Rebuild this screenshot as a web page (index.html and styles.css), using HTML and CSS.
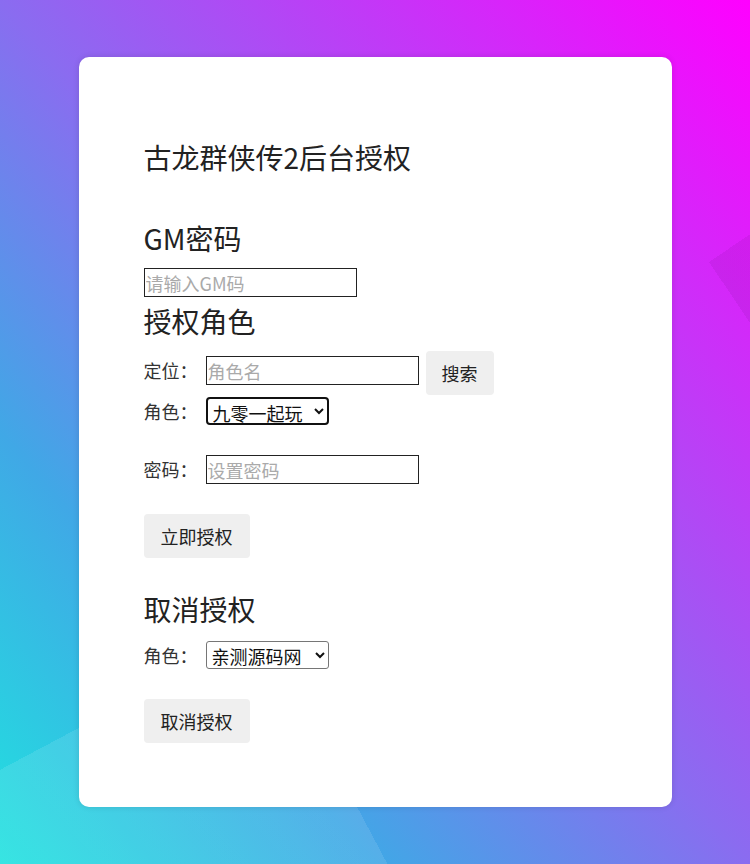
FILE: index.html
```html
<!DOCTYPE html>
<html lang="zh-CN">
<head>
  <meta charset="UTF-8" />
  <title>古龙群侠传2后台授权</title>
  <link rel="stylesheet" href="styles.css">
</head>
<body>
  <div class="container">
    <h2 class="title">古龙群侠传2后台授权</h2>

    <h3 class="gm-title">GM密码</h3>
    <input type="text" class="gm-input" placeholder="请输入GM码" />

    <h3 class="role-title">授权角色</h3>
    <div class="field field-search">
      <label>定位：</label>
      <input type="text" placeholder="角色名" />
      <button class="btn">搜索</button>
    </div>
    <div class="field field-role">
      <label>角色：</label>
      <select class="select-focus">
        <option>九零一起玩</option>
      </select>
    </div>
    <div class="field field-pass">
      <label>密码：</label>
      <input type="text" placeholder="设置密码" />
    </div>
    <button class="btn btn-grant">立即授权</button>

    <h3 class="cancel-title">取消授权</h3>
    <div class="field field-cancel">
      <label>角色：</label>
      <select>
        <option>亲测源码网</option>
      </select>
    </div>
    <button class="btn btn-cancel">取消授权</button>
  </div>
</body>
</html>
```

FILE: styles.css
```css
* {
  box-sizing: border-box;
}

html, body {
  height: 100%;
}

body {
  margin: 0;
  min-height: 864px;
  overflow: hidden;
  font-family: "Microsoft YaHei", "Noto Sans CJK SC", "Noto Sans", sans-serif;
  color: #222;
  /* two faint rotated squares over the main gradient */
  background:
    conic-gradient(from 152deg at 263px 630px, rgba(255, 255, 255, 0.1) 0deg 90deg, transparent 90deg),
    conic-gradient(from 56deg at 709px 262px, rgba(60, 0, 80, 0.08) 0deg 90deg, transparent 90deg),
    linear-gradient(to top right, #20e2df 0%, #40a8e6 25%, #8a6cf0 50%, #ff00ff 100%);
}

.container {
  width: 593px;
  margin: 57px auto 0;
  padding: 80px 65px 64px;
  background: white;
  border-radius: 10px;
  box-shadow: 0 0 6px rgba(0, 0, 0, 0.12);
}

h2, h3 {
  margin: 0;
  font-size: 28px;
  font-weight: normal;
  line-height: 40px;
}

.gm-title {
  margin-top: 41px;
}

.role-title {
  margin-top: 4px;
}

.cancel-title {
  margin-top: 31px;
}

input {
  display: block;
  width: 213px;
  height: 29px;
  padding: 0 1px;
  font-family: inherit;
  font-size: 18px;
  color: #222;
  border: 1px solid #222;
  border-radius: 0;
  outline: none;
}

input::placeholder {
  color: #aaa;
}

.gm-input {
  margin-top: 10px;
}

select {
  width: 123px;
  height: 28px;
  padding: 0 1px;
  font-family: inherit;
  font-size: 18px;
  color: #111;
  background: white;
  border: 1px solid #767676;
  border-radius: 3px;
}

.select-focus {
  border: 2px solid #111;
  border-radius: 4px;
}

.field {
  display: flex;
  align-items: flex-start;
  gap: 8px;
}

.field label {
  font-size: 18px;
  line-height: 29px;
  color: #333;
}

.field-search {
  margin-top: 10px;
}

.field-search label,
.field-search input {
  margin-top: 5px;
}

.field-search .btn {
  margin-left: -1px;
}

.field-role {
  margin-top: 2px;
}

.field-role label,
.field-cancel label {
  line-height: 28px;
}

.field-pass {
  margin-top: 30px;
}

.field-cancel {
  margin-top: 12px;
}

.btn {
  display: block;
  height: 44px;
  padding: 0 16px;
  font-family: inherit;
  font-size: 18px;
  color: #222;
  background: #efefef;
  border: none;
  border-radius: 4px;
}

.btn-grant,
.btn-cancel {
  margin-top: 30px;
  padding: 0 17px;
}
```
